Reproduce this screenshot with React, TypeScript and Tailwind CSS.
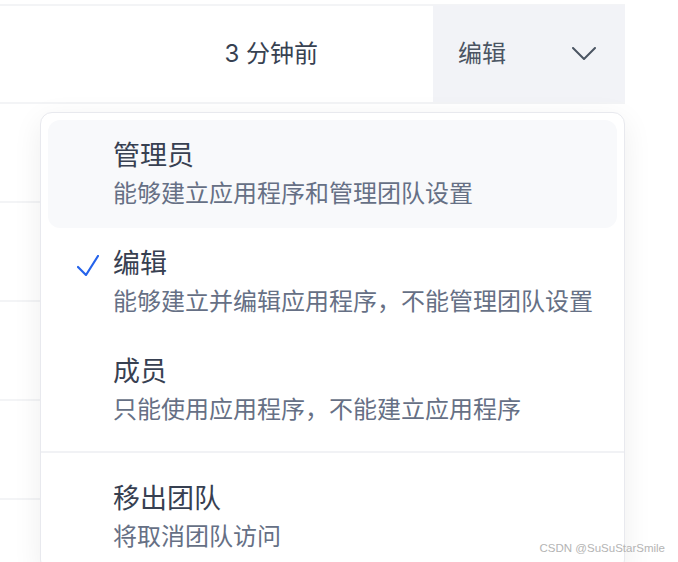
import React from 'react';

const roles = [
    { title: '管理员', desc: '能够建立应用程序和管理团队设置', active: false, hover: true },
    { title: '编辑', desc: '能够建立并编辑应用程序，不能管理团队设置', active: true, hover: false },
    { title: '成员', desc: '只能使用应用程序，不能建立应用程序', active: false, hover: false },
];

const font = { fontFamily: 'Inter, "Noto Sans CJK SC", sans-serif' };

const MenuItem: React.FC<{ title: string; desc: string; active?: boolean; hover?: boolean }> = ({
    title,
    desc,
    active,
    hover,
}) => (
    <div className={`flex h-[108px] rounded-xl pt-[17px] ${hover ? 'bg-[#f8f9fb]' : ''}`}>
        <div className="w-[65px] shrink-0 pl-[29px] pt-[10px]">
            {active && (
                <svg width="22" height="21" viewBox="0 0 22 21" fill="none">
                    <polyline
                        points="1,12 9,20 21,1"
                        stroke="#2563eb"
                        strokeWidth="2.2"
                        strokeLinecap="round"
                        strokeLinejoin="round"
                    />
                </svg>
            )}
        </div>
        <div>
            <div className="text-[27px] leading-[38px] text-[#374051]">{title}</div>
            <div className="text-[24px] leading-[38px] text-[#667085]">{desc}</div>
        </div>
    </div>
);

export default function App() {
    return (
        <div className="relative h-[562px] w-[678px] overflow-hidden bg-white" style={font}>
            <div className="w-[625px]">
                <div className="h-[6px] border-b-2 border-[#f3f4f6]" />
                <div className="flex h-[98px] border-b-2 border-[#f3f4f6]">
                    <div className="flex flex-1 items-center justify-end pr-[115px] text-[24px] text-[#374151]">
                        3 分钟前
                    </div>
                    <div className="-mt-[1px] flex w-[192px] items-center justify-between bg-[#f2f3f7] pl-[25px] pr-[29px] text-[24px] text-[#4b5563]">
                        <span>编辑</span>
                        <svg width="24" height="13" viewBox="0 0 24 13" fill="none">
                            <polyline
                                points="1,1 12,12 23,1"
                                stroke="#4b5563"
                                strokeWidth="2"
                                strokeLinecap="round"
                                strokeLinejoin="round"
                            />
                        </svg>
                    </div>
                </div>
                <div className="h-[99px] border-b-2 border-[#f3f4f6]" />
                <div className="h-[99px] border-b-2 border-[#f3f4f6]" />
                <div className="h-[99px] border-b-2 border-[#f3f4f6]" />
                <div className="h-[99px] border-b-2 border-[#f3f4f6]" />
            </div>

            <div className="absolute left-[40px] top-[112px] w-[585px] rounded-xl border border-[#e8e9ee] bg-white shadow-[0_8px_30px_rgba(0,0,0,0.07)]">
                <div className="p-[7px]">
                    {roles.map((r) => (
                        <MenuItem key={r.title} {...r} />
                    ))}
                </div>
                <div className="h-[2px] bg-[#f1f2f5]" />
                <div className="px-[7px] pt-[10px]">
                    <MenuItem title="移出团队" desc="将取消团队访问" />
                </div>
            </div>

            <div
                className="absolute right-[13px] top-[540px] text-[11.5px] text-[#b4b4b4]"
                style={{ fontFamily: '"Liberation Sans", sans-serif' }}
            >
                CSDN @SuSuStarSmile
            </div>
        </div>
    );
}
